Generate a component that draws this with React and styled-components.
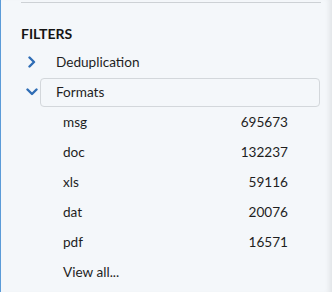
import styled, { createGlobalStyle } from "styled-components";

const GlobalStyle = createGlobalStyle`
  html, body {
    margin: 0;
    padding: 0;
    background: #f4f7fa;
  }
  body {
    font-family: Lato, "Open Sans", sans-serif;
  }
`;

const Sidebar = styled.aside`
  box-sizing: border-box;
  width: 332px;
  height: 292px;
  padding: 2px 11px 0 20px;
  background: #f4f7fa;
  border-left: 1px solid #5b9bd8;
  box-shadow: inset -6px 0 5px -3px rgba(0, 0, 0, 0.07);
  overflow: hidden;
`;

const Divider = styled.div`
  height: 1px;
  background: #cdd1d5;
`;

const Title = styled.h3`
  margin: 23px 0 5px 0;
  font-size: 14px;
  line-height: 16px;
  font-weight: 700;
  color: #151515;
`;

const GroupRow = styled.div`
  display: flex;
  align-items: center;
  height: 30px;
`;

const Toggle = styled.span`
  display: flex;
  align-items: center;
  width: 19px;
  padding-left: 5px;
  box-sizing: border-box;
`;

const Label = styled.div`
  box-sizing: border-box;
  width: 280px;
  height: 29px;
  display: flex;
  align-items: center;
  padding-left: 15px;
  font-size: 13.6px;
  color: #1e1e1e;
  border: 1.5px solid ${({ $active }) => ($active ? "#d3d7db" : "transparent")};
  border-radius: 4px;
`;

const Items = styled.ul`
  list-style: none;
  margin: 0;
  padding: 0 0 0 42px;
  width: 267px;
  box-sizing: border-box;
`;

const Item = styled.li`
  display: flex;
  justify-content: space-between;
  align-items: center;
  height: 30px;
  font-size: 13.6px;
  color: #1e1e1e;
`;

const Chevron = ({ open }) => (
  <svg width="12" height="12" viewBox="0 0 12 12">
    <polyline
      points={open ? "1.5,3.5 6,8 10.5,3.5" : "3.5,1.5 8,6 3.5,10.5"}
      fill="none"
      stroke="#2f6db5"
      strokeWidth="2.4"
      strokeLinecap="round"
      strokeLinejoin="round"
    />
  </svg>
);

const formats = [
  ["msg", 695673],
  ["doc", 132237],
  ["xls", 59116],
  ["dat", 20076],
  ["pdf", 16571],
];

const App = () => (
  <>
    <GlobalStyle />
    <Sidebar>
      <Divider />
      <Title>FILTERS</Title>
      <GroupRow>
        <Toggle>
          <Chevron />
        </Toggle>
        <Label>Deduplication</Label>
      </GroupRow>
      <GroupRow>
        <Toggle>
          <Chevron open />
        </Toggle>
        <Label $active>Formats</Label>
      </GroupRow>
      <Items>
        {formats.map(([name, count]) => (
          <Item key={name}>
            <span>{name}</span>
            <span>{count}</span>
          </Item>
        ))}
        <Item>
          <span>View all...</span>
        </Item>
      </Items>
    </Sidebar>
  </>
);

export default App;
